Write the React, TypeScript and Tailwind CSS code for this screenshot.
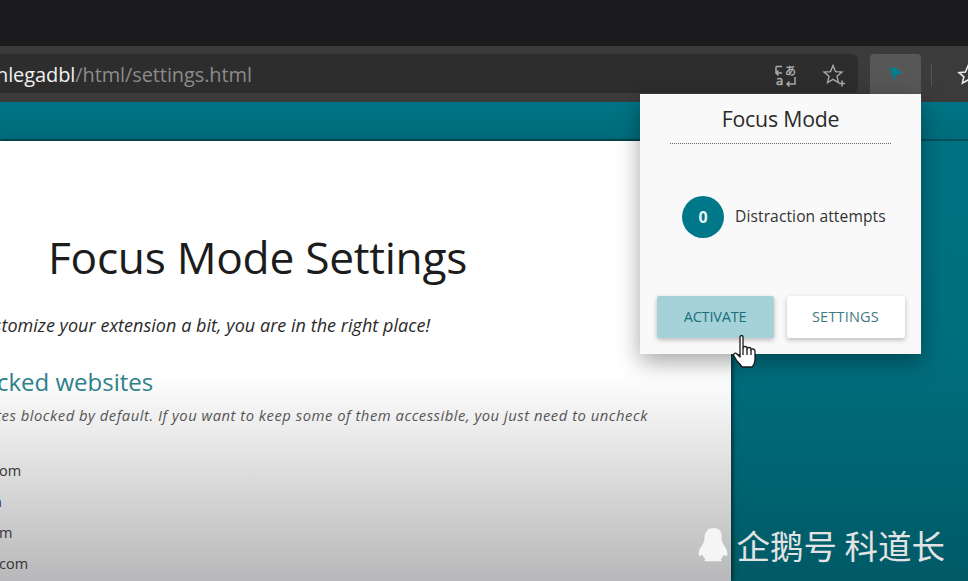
import React from "react";

const Site = ({ text, ml }: { text: string; ml: string }) => (
  <div className={`h-[31px] leading-[31px] text-[14.5px] text-[#333333] whitespace-nowrap ${ml}`}>{text}</div>
);

export default function App() {
  return (
    <div className="relative w-[968px] h-[581px] overflow-hidden flex flex-col bg-[#00606d] font-['Open_Sans','Noto_Sans_CJK_SC',sans-serif]">
      <div className="h-[46px] shrink-0 bg-[#1b1a1d]" />
      <div className="h-[56px] shrink-0 bg-[#3b3b3b] flex items-start pt-[8px]">
        <div className="w-[858px] h-[39px] bg-[#2d2d2d] rounded-r-[6px] flex items-center overflow-hidden shrink-0">
          <div className="flex-1 text-[20px] whitespace-nowrap tracking-[-0.1px] overflow-hidden pt-[2px]">
            <span className="text-[#f1f1f1] ml-[-4px]">hlegadbl</span>
            <span className="text-[#8b8b8b]">/html/settings.html</span>
          </div>
          <svg width="22" height="22" viewBox="0 0 22 22" fill="none" stroke="#a9a9a9" strokeWidth="1.5" className="mr-[25px] mt-[2px] overflow-visible">
            <path d="M1 2.500h6M1 2.500v6.500h6M3.500 6.500L1 9l2.500 2.500" />
            <text x="10" y="11" fontSize="11" fill="#b5b5b5" stroke="#b5b5b5" strokeWidth="0.3" fontFamily="'Noto Sans CJK JP', sans-serif">あ</text>
            <text x="1" y="21" fontSize="13" fill="#b5b5b5" stroke="#b5b5b5" strokeWidth="0.5" fontFamily="'Open Sans', sans-serif">a</text>
            <path d="M20 13v7h-8M14.500 17.500L12 20l2.500 2.500" />
          </svg>
          <svg width="24" height="24" viewBox="0 0 24 24" fill="none" stroke="#a9a9a9" strokeWidth="1.4" className="mr-[12px] mt-[2px]">
            <path d="M11 2.500l2.500 6.100 6.500.5-5 4.200 1.500 6.300L11 16.300l-5.500 3.300L7 13.300 2 9.100l6.500-.5z" />
            <path d="M20 17.500v6M17 20.500h6" strokeWidth="1.6" />
          </svg>
        </div>
        <div className="ml-[12px] w-[51px] h-[40px] bg-[#575757] rounded-t-[4px] flex items-center justify-center shrink-0">
          <svg width="20" height="20" viewBox="0 0 20 20" fill="#00808f">
            <path d="M2 3l6 1.500L10 3l1 2.500 6 3-3.500 1-1.500 1-2 .5L9 17l-2-5.500-3-2.500 2.500-1z" />
          </svg>
        </div>
        <div className="ml-[10px] mt-[10px] w-px h-[22px] bg-[#555555] shrink-0" />
        <svg width="24" height="24" viewBox="0 0 24 24" fill="none" stroke="#e8e8e8" strokeWidth="1.6" className="ml-[25px] mt-[9px] shrink-0">
          <path d="M11 3l2.600 6 6.400.6-4.800 4.300 1.400 6.300L11 17l-5.600 3.200 1.400-6.300L2 9.600 8.400 9z" />
        </svg>
      </div>
      <div className="flex-1 min-h-0 flex flex-col bg-gradient-to-b from-[#007283] via-[#006f7f] to-[#005a66]">
        <div className="h-[39px] shrink-0 bg-gradient-to-b from-[#007485] to-[#006c7b] border-b-2 border-[#00505a]" />
        <div className="flex-1 min-h-0 flex">
          <div className="w-[731px] shrink-0 overflow-hidden shadow-[2px_0_4px_rgba(0,0,0,0.5)] bg-[linear-gradient(to_bottom,#ffffff_0,#ffffff_232px,#b8b8ba_440px)]">
            <h1 className="ml-[48px] mt-[86px] text-[44.3px] leading-[60px] tracking-[-0.3px] text-[#1c1c1c] whitespace-nowrap">Focus Mode Settings</h1>
            <p className="ml-[-25px] mt-[25px] text-[18px] leading-[26px] italic text-[#2a2a2a] whitespace-nowrap tracking-[0.04px]">customize your extension a bit, you are in the right place!</p>
            <h2 className="ml-[-39px] mt-[26px] text-[24px] leading-[36px] text-[#2d8189] whitespace-nowrap">Blocked websites</h2>
            <p className="ml-[-43px] mt-[4px] text-[14.8px] leading-[22px] italic text-[#555555] whitespace-nowrap tracking-[0.51px]">websites blocked by default. If you want to keep some of them accessible, you just need to uncheck</p>
            <div className="mt-[29px]">
              <Site text="om" ml="ml-[-1px]" />
              <Site text="n" ml="ml-[-7px]" />
              <Site text="m" ml="ml-[-1px]" />
              <Site text="com" ml="ml-[-1px]" />
            </div>
          </div>
          <div className="flex-1 flex items-end justify-end pb-[16px] pr-[23px]">
            <span className="text-[33.5px] leading-[40px] text-[#e3e3e3] font-['Noto_Sans_CJK_SC',sans-serif] whitespace-nowrap">企鹅号 科道长</span>
          </div>
        </div>
      </div>

      <div className="absolute left-[640px] top-[94px] w-[281px] h-[260px] bg-[#f9f9f9] shadow-[0_8px_22px_rgba(0,0,0,0.35)] flex flex-col items-center">
        <div className="w-[221px] h-[50px] border-b border-dotted border-[#6a6a6a] text-center text-[21.3px] leading-[50px] text-[#2a2a2a] tracking-[-0.2px]">Focus Mode</div>
        <div className="flex items-center w-full pl-[42px] mt-[52px]">
          <div className="w-[42px] h-[42px] rounded-full bg-[#00788a] flex items-center justify-center text-[#e8f3f4] font-bold text-[16px]">0</div>
          <span className="ml-[11px] text-[15.6px] text-[#333333] tracking-[0.1px]">Distraction attempts</span>
        </div>
        <div className="flex gap-[13px] mt-[58px]">
          <div className="w-[117px] h-[42px] bg-[#a5d2d8] rounded-[2px] shadow-[0_2px_5px_rgba(0,0,0,0.25)] flex items-center justify-center text-[14.5px] tracking-[-0.2px] text-[#19707c]">ACTIVATE</div>
          <div className="w-[118px] h-[42px] bg-white rounded-[2px] shadow-[0_2px_5px_rgba(0,0,0,0.25)] flex items-center justify-center text-[14.5px] tracking-[0.2px] text-[#3f7a84]">SETTINGS</div>
        </div>
      </div>

      <svg className="absolute left-[732px] top-[334px]" width="28" height="36" viewBox="0 0 28 36" fill="#ffffff" stroke="#1a1a1a" strokeWidth="1.3" strokeLinejoin="round">
        <path d="M8 3c0-2 3-2 3 0v11c0-2 4-2 4 0v1c0-2 4-2 4 0v1c0-2 4-1 4 1v8c0 4-2 7-3 8H10c-1-2-3-4-5-6l-3-5c-1-2 1-4 3-2l3 3z" />
        <path d="M11 14v7M15 15v6M19 16v5" fill="none" />
      </svg>

      <svg className="absolute left-[697px] top-[527px]" width="33" height="36" viewBox="0 0 33 36" fill="#f5f5f5">
        <path d="M16.500 1C10 1 7.500 6 7.500 11c0 3-1 5-3 8-2.500 3.500-3.500 8-2.500 9.500 1 1 2.500 0 3.500-1 .5 2 1.500 3.500 3 4.500-1.500.8-1.500 2 0 2.300h6c1 0 2 0 3 0h6c1.500-.3 1.500-1.500 0-2.300 1.500-1 2.500-2.500 3-4.500 1 1 2.500 2 3.500 1 1-1.500 0-6-2.500-9.500-2-3-3-5-3-8C25.500 6 23 1 16.500 1z" />
      </svg>
    </div>
  );
}
